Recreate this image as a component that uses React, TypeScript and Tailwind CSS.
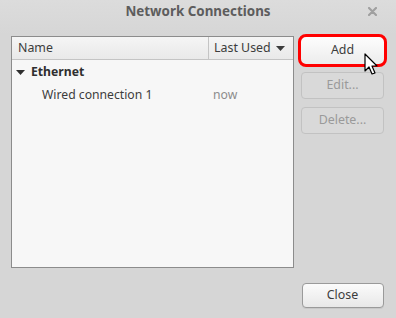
import React from "react";

const font = { fontFamily: '"Noto Sans", "Open Sans", sans-serif' };

const Cursor: React.FC = () => (
  <svg width="16" height="24" viewBox="0 0 16 24" className="absolute left-[63px] top-[16px]">
    <path
      d="M1 1 L1 18 L5 14 L8 21 L11 20 L8 13 L13 13 Z"
      fill="#fff"
      stroke="#000"
      strokeWidth="1.2"
      strokeLinejoin="round"
    />
  </svg>
);

const App: React.FC = () => {
  return (
    <div className="w-[396px] h-[318px] bg-[#d6d6d6] flex flex-col text-[#3c3c3c]" style={font}>
      <div className="h-[34px] relative flex items-center justify-center bg-gradient-to-b from-[#dcdcdc] to-[#d6d6d6]">
        <span className="text-[13.4px] font-bold text-[#5d5d5d] -mt-[11px]">Network Connections</span>
        <svg width="9" height="9" viewBox="0 0 9 9" className="absolute right-[19px] top-[7px]">
          <path d="M1 1 L8 8 M8 1 L1 8" stroke="#a0a0a0" strokeWidth="2.2" strokeLinecap="round" />
        </svg>
      </div>

      <div className="flex flex-1 pl-[11px] pb-[10px]">
        <div className="mt-[2px] w-[283px] h-[232px] bg-[#f7f7f7] border border-[#8c8c8c] flex flex-col">
          <div className="h-[23px] flex text-[12.4px] bg-gradient-to-b from-[#f5f5f5] to-[#e9e9e9] border-b border-[#c4c4c4]">
            <div className="w-[197px] flex items-center pl-[6px] border-r border-[#c4c4c4]">Name</div>
            <div className="flex-1 flex items-center pl-[5px] gap-[5px]">
              Last Used
              <svg width="9" height="5" viewBox="0 0 9 5">
                <path d="M0 0 L9 0 L4.5 5 Z" fill="#3c3c3c" />
              </svg>
            </div>
          </div>
          <div className="h-[24px] flex items-center pl-[4px] text-[12.2px] font-bold text-[#2f2f2f]">
            <svg width="9" height="5" viewBox="0 0 9 5" className="mr-[6px]">
              <path d="M0 0 L9 0 L4.5 5 Z" fill="#2f2f2f" />
            </svg>
            Ethernet
          </div>
          <div className="h-[22px] flex items-center text-[12.2px]">
            <span className="w-[201px] pl-[30px] text-[#3c3c3c]">Wired connection 1</span>
            <span className="text-[#8c8c8c]">now</span>
          </div>
        </div>

        <div className="ml-[4px] w-[89px] flex flex-col items-center">
          <div className="relative w-[89px] h-[33px] rounded-[8px] border-[3px] border-[#ff0000] bg-gradient-to-b from-[#fdfdfd] to-[#ececec] flex items-center justify-center text-[12.4px] text-[#3c3c3c]">
            Add
            <Cursor />
          </div>
          <div className="mt-[5px] w-[83px] h-[27px] rounded-[4px] border border-[#c2c2c2] bg-[#d9d9d9] flex items-center justify-center text-[12.4px] text-[#9a9a9a]">
            Edit...
          </div>
          <div className="mt-[8px] w-[83px] h-[27px] rounded-[4px] border border-[#c2c2c2] bg-[#d9d9d9] flex items-center justify-center text-[12.4px] text-[#9a9a9a]">
            Delete...
          </div>
          <div className="mt-auto w-[82px] h-[25px] rounded-[4px] border border-[#9a9a9a] bg-gradient-to-b from-[#fbfbfb] to-[#e8e8e8] shadow-[0_1px_0_#c8c8c8] flex items-center justify-center text-[12.4px] text-[#3c3c3c]">
            Close
          </div>
        </div>
      </div>
    </div>
  );
};

export default App;
